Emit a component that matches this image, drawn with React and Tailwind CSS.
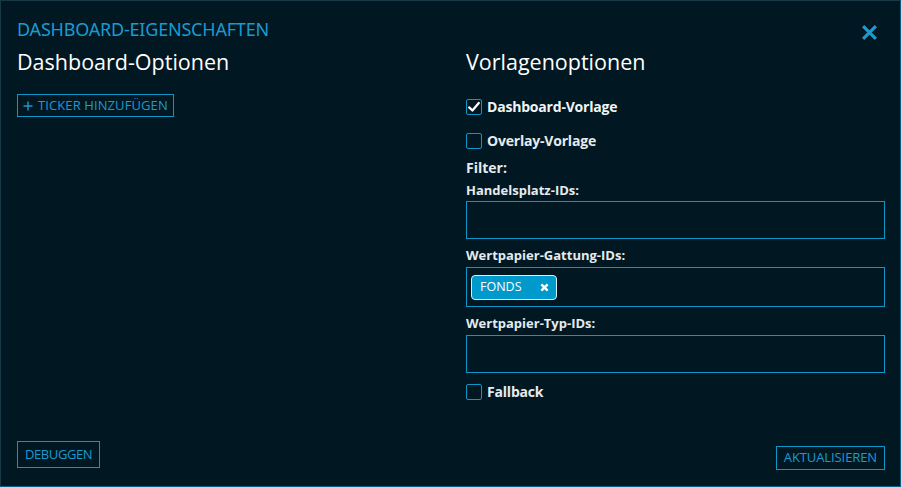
import React from 'react';

const Checkbox = ({ checked }) => (
  <span className="w-4 h-4 border border-[#0b98c8] rounded-[2px] flex items-center justify-center shrink-0">
    {checked && (
      <svg viewBox="0 0 16 16" className="w-3.5 h-3.5">
        <path d="M2.5 8.5 L6.2 12 L13.5 3.5" fill="none" stroke="#ffffff" strokeWidth="2.6" strokeLinecap="round" strokeLinejoin="round" />
      </svg>
    )}
  </span>
);

const FieldLabel = ({ children }) => (
  <div className="text-[13px] font-bold text-[#e6ebee] leading-none">{children}</div>
);

const App = () => {
  return (
    <div className="w-[901px] h-[487px] bg-[#011722] border border-[#173845] border-b-[#0c5f80] border-r-[#0c5f80] flex flex-col pl-4 pr-[15px] pt-[17px] pb-4 text-white" style={{ fontFamily: '"Open Sans", "Noto Sans", sans-serif' }}>
      {/* Header */}
      <div className="flex items-start justify-between">
        <h2 className="text-[18px] leading-[22px] text-[#1a9bd0] tracking-[-0.2px] uppercase" style={{ fontFamily: '"Noto Sans", sans-serif' }}>Dashboard-Eigenschaften</h2>
        <button className="mt-[6px] mr-[7px]">
          <svg viewBox="0 0 16 16" className="w-[17px] h-[17px]">
            <path d="M2 2 L14 14 M14 2 L2 14" stroke="#1a9bd0" strokeWidth="3" strokeLinecap="butt" />
          </svg>
        </button>
      </div>

      <div className="flex flex-1 mt-[6px]">
        {/* Left column */}
        <div className="flex-1 flex flex-col">
          <h3 className="text-[21.5px] leading-[30px] text-white">Dashboard-Optionen</h3>
          <div className="mt-[17px]">
            <button className="h-[23px] px-[5px] border border-[#0b98c8] text-[#1a9bd0] text-[13px] flex items-center gap-[5px] tracking-[0.1px]">
              <svg viewBox="0 0 10 10" className="w-[10px] h-[10px]">
                <path d="M5 0.5 V9.5 M0.5 5 H9.5" stroke="#1a9bd0" strokeWidth="1.4" />
              </svg>
              TICKER HINZUFÜGEN
            </button>
          </div>
          <div className="flex-1" />
          <div>
            <button className="h-[27px] px-[7px] border border-[#0b98c8] text-[#1a9bd0] text-[13px] tracking-[-0.4px] mb-[2px]">DEBUGGEN</button>
          </div>
        </div>

        {/* Right column */}
        <div className="w-[419px] flex flex-col">
          <h3 className="text-[21.5px] leading-[30px] text-white">Vorlagenoptionen</h3>
          <div className="mt-[19px] flex items-center gap-[5px]">
            <Checkbox checked />
            <span className="text-[14px] font-bold text-[#f1f4f6] tracking-[-0.2px]">Dashboard-Vorlage</span>
          </div>
          <div className="mt-[13px] flex items-center gap-[5px]">
            <Checkbox />
            <span className="text-[14px] font-bold text-[#e6ebee] tracking-[-0.2px]">Overlay-Vorlage</span>
          </div>
          <div className="mt-[10px] text-[14px] font-bold text-[#e6ebee] leading-none">Filter:</div>
          <div className="mt-[9px]"><FieldLabel>Handelsplatz-IDs:</FieldLabel></div>
          <div className="mt-[4px] h-[38px] border border-[#0b98c8]" />
          <div className="mt-[10px]"><FieldLabel>Wertpapier-Gattung-IDs:</FieldLabel></div>
          <div className="mt-[5px] h-[40px] border border-[#0b98c8] flex items-center px-[4px]">
            <span className="h-[25px] w-[86px] rounded-[4px] bg-[#0099cc] border border-[#dbeef5] flex items-center justify-between pl-[8px] pr-[7px] text-[12.5px] text-white">
              FONDS
              <svg viewBox="0 0 10 10" className="w-[9px] h-[9px]">
                <path d="M1.5 1.5 L8.5 8.5 M8.5 1.5 L1.5 8.5" stroke="#ffffff" strokeWidth="2.6" />
              </svg>
            </span>
          </div>
          <div className="mt-[10px]"><FieldLabel>Wertpapier-Typ-IDs:</FieldLabel></div>
          <div className="mt-[5px] h-[38px] border border-[#0b98c8]" />
          <div className="mt-[8px] flex items-center gap-[5px]">
            <Checkbox />
            <span className="text-[14px] font-bold text-[#e6ebee] tracking-[-0.2px]">Fallback</span>
          </div>
          <div className="flex-1" />
          <div className="flex justify-end">
            <button className="h-[24px] px-[7px] border border-[#0b98c8] text-[#1a9bd0] text-[13px] tracking-[-0.1px]">AKTUALISIEREN</button>
          </div>
        </div>
      </div>
    </div>
  );
};

export default App;
